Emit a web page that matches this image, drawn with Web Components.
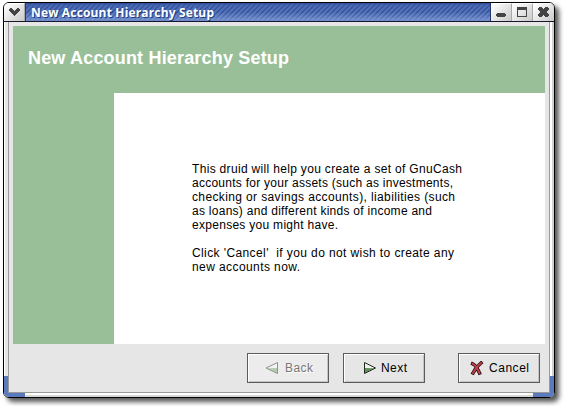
<!DOCTYPE html>
<html lang="en"><head><meta charset="utf-8"><title>New Account Hierarchy Setup</title>
<style>html,body{margin:0;background:#fff;overflow:hidden}body{width:564px;height:406px;font-family:"Liberation Sans",Arial,sans-serif}</style></head>
<body>
<druid-window>
 <title-bar slot="title"><fit-line w="183">New Account Hierarchy Setup</fit-line></title-bar>
 <druid-page>
  <fit-line slot="heading" w="261">New Account Hierarchy Setup</fit-line>
  <fit-line w="270">This druid will help you create a set of GnuCash</fit-line>
  <fit-line w="261">accounts for your assets (such as investments,</fit-line>
  <fit-line w="263">checking or savings accounts), liabilities (such</fit-line>
  <fit-line w="240">as loans) and different kinds of income and</fit-line>
  <fit-line w="146">expenses you might have.</fit-line>
  <fit-line w="262" gap>Click 'Cancel'&nbsp; if you do not wish to create any</fit-line>
  <fit-line w="108">new accounts now.</fit-line>
 </druid-page>
 <druid-button slot="actions" icon="back" disabled><fit-line w="28">Back</fit-line></druid-button>
 <druid-button slot="actions" icon="next"><fit-line w="26">Next</fit-line></druid-button>
 <druid-button slot="actions" icon="cancel"><fit-line w="40">Cancel</fit-line></druid-button>
</druid-window>
<script>
const make=(el,html)=>{el.attachShadow({mode:'open'}).innerHTML=html};

/* One line of text, tracked so that it fills the width given in "w". */
class FitLine extends HTMLElement{
 constructor(){super();make(this,`<style>:host{display:block;white-space:pre}:host([gap]){margin-top:14px}span{display:inline-block}</style><span><slot></slot></span>`)}
 fit(){const s=this.shadowRoot.querySelector('span');s.style.letterSpacing='0';
  const n=this.textContent.length,d=+this.getAttribute('w')-s.getBoundingClientRect().width;
  s.style.letterSpacing=(d/(n-1))+'px'}
}
class WmButton extends HTMLElement{
 constructor(){super();
  const icons={
   menu:'<path d="M6 5h2v1h1v1h1v1h1V7h1V6h1V5h2v1h1v2h-1v1h-1v1h-1v1h-1v1h-1v1h-1v-1H9v-1H8v-1H7V9H6V8H5V6h1z" fill="#444"/>',
   min:'<path d="M6 10h8v1h1v2h-1v1H6v-1H5v-2h1z" fill="#444"/>',
   max:'<path d="M5 4h10v10H5zM6 7v6h8V7z" fill="#444" fill-rule="evenodd"/>',
   close:'<path d="M6 4h3v1h1v1h1V5h1V4h3v1h1v2h-1v1h-1v2h1v1h1v2h-1v1h-3v-1h-1v-1h-1v1H9v1H6v-1H5v-2h1v-1h1V8H6V7H5V5h1z" fill="#444"/>'};
  make(this,`<style>:host{display:block;flex:none;box-sizing:border-box;width:21px;height:18px;background:linear-gradient(135deg,#fff 5%,#eee 35%,#c9c9c9);border-right:1px solid #aaa;border-top:1px solid #fff}
  svg{display:block;margin-top:-1px}</style><svg width="20" height="18" shape-rendering="crispEdges">${icons[this.getAttribute('kind')]}</svg>`)}
}
class TitleBar extends HTMLElement{
 constructor(){super();make(this,`<style>
 :host{display:flex;height:18px;border-bottom:1px solid #15182a;background:#aaa}
 .caption{flex:1;box-sizing:border-box;padding:1px 0 0 5px;border-left:1px solid #23366f;border-right:1px solid #23366f;
  font:bold 12px/17px "Open Sans","Noto Sans",sans-serif;color:#fff;text-shadow:1px 1px #233b78;
  background:linear-gradient(#2c4a97,#4060ae80 12%,#4464ae00 50%,#8da6dd99 92%,#6d89cd),repeating-linear-gradient(135deg,#35539d 0 1.414px,#5271b6 1.414px 3.535px);}
 wm-button:last-child{border-right:0}
 </style><wm-button kind="menu"></wm-button><div class="caption"><slot></slot></div><wm-button kind="min"></wm-button><wm-button kind="max"></wm-button><wm-button kind="close"></wm-button>`)}
}
class DruidPage extends HTMLElement{
 constructor(){super();make(this,`<style>
 :host{display:grid;grid-template:67px 251px / 101px 431px;background:#99bf99;color:#000;font-size:12px;line-height:14px}
 header{grid-column:1/3;padding:22px 0 0 15px;color:#fff;font-size:18px;font-weight:bold;line-height:21px}
 main{grid-column:2;background:#fff;padding:69px 0 0 78px}
 </style><header><slot name="heading"></slot></header><main><slot></slot></main>`)}
}
class DruidButton extends HTMLElement{
 constructor(){super();
  const icons={
   back:'<path d="M12.5 1.5v11L1 7z" fill="#f0f3ef"/><path d="M12 7v5L2.5 7.3z" fill="#b4cbb0"/><path d="M12.5 1.5v11L1 7z" fill="none" stroke="#8d938c"/>',
   next:'<path d="M1.5 1.5v11L12.5 7z" fill="#eef4ec"/><path d="M2 7v5l9.5-4.8z" fill="#60925a"/><path d="M1.5 1.5v11L12.5 7z" fill="none" stroke="#20281f"/>',
   cancel:'<g fill="none" stroke-linecap="square"><path d="M2.7 2.8Q6 4 9.5 12M11 2Q6 6 3 12" stroke="#26090c" stroke-width="3.5"/><path d="M2.7 2.8Q6 4 9.5 12M11 2Q6 6 3 12" stroke="#c1424e" stroke-width="1.9"/></g>'};
  make(this,`<style>
  :host{display:flex;box-sizing:border-box;width:82px;height:30px;border:1px solid #5b5b5b;box-shadow:inset 1px 1px #fff,inset -1px -1px #c4c4c4;background:#e6e6e6;padding:7px 0 0 17px;gap:6px;font-size:12px;line-height:14px;color:#000}
  :host([icon=next]){padding-left:19px;gap:4px}
  :host([icon=cancel]){padding-left:11px;gap:5px}
  :host([disabled]){color:#777;background:#ececec;text-shadow:1px 1px #fff}
  svg{flex:none;display:block}</style><svg width="14" height="15">${icons[this.getAttribute('icon')]}</svg><slot></slot>`)}
}
class DruidWindow extends HTMLElement{
 constructor(){super();make(this,`<style>
 :host{display:block;width:564px;height:406px;padding:2px 0 0 3px;box-sizing:border-box}
 .shade{width:552px;height:396px;border-radius:6px;box-shadow:4px 4px 5px #000a}
 .win{position:relative;box-sizing:border-box;width:552px;height:396px;border:1px solid #000;border-radius:6px;background:#e9e9e9;overflow:hidden}
 .frame{box-sizing:border-box;height:375px;padding:0 4px;background:linear-gradient(#0000 371px,#fff 371px 373px,#d5d5d5 373px),linear-gradient(90deg,#fff 1px,#e6e6e6 1px 546px,#fff 546px 548px,#d0d0d0 548px)}
 .client{box-sizing:border-box;width:542px;height:371px;border:1px solid #999;border-top:0;padding:4px;background:#e6e6e6}
 .actions{display:flex;padding:9px 0 0 234px;gap:14px}
 ::slotted([icon=cancel]){margin-left:19px}
 .grip{position:absolute;bottom:0;width:21px;height:21px;box-sizing:border-box}
 .l{left:0;border-left:4px solid #5a7abd;border-bottom:4px solid #5a7abd;border-radius:0 0 0 4px}
 .r{right:0;border-right:4px solid #5a7abd;border-bottom:4px solid #5a7abd;border-radius:0 0 4px 0}
 </style><div class="shade"><div class="win"><slot name="title"></slot><div class="frame"><div class="client"><slot></slot><div class="actions"><slot name="actions"></slot></div></div></div><i class="grip l"></i><i class="grip r"></i></div></div>`)}
}
customElements.define('wm-button',WmButton);
customElements.define('title-bar',TitleBar);
customElements.define('druid-page',DruidPage);
customElements.define('druid-button',DruidButton);
customElements.define('druid-window',DruidWindow);
customElements.define('fit-line',FitLine);
document.querySelectorAll('fit-line').forEach(l=>l.fit());
</script>
</body></html>
